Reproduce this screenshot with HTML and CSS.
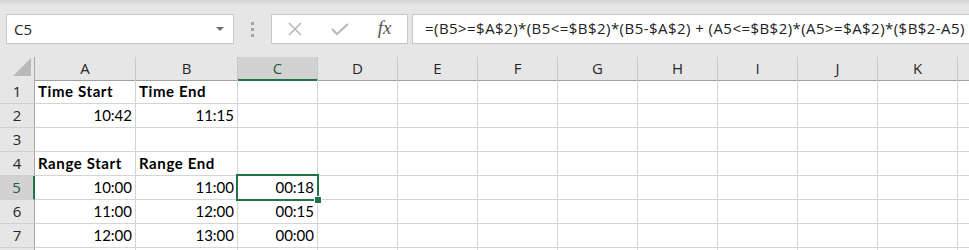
FILE: index.html
```html
<!DOCTYPE html>
<html lang="en">
<head>
    <meta charset="UTF-8">
    <title>Book1 - Excel</title>
    <link rel="stylesheet" href="styles.css">
</head>
<body>
    <div class="toolbar">
        <div class="name-box">
            <span>C5</span>
            <span class="drop"></span>
        </div>
        <div class="grip"><i></i><i></i><i></i></div>
        <div class="fx-buttons">
            <span class="fx-btn">
                <svg width="16" height="16" viewBox="0 0 16 16"><path d="M2 2 L14 14 M14 2 L2 14" stroke="#b8b8b8" stroke-width="1.6" fill="none"/></svg>
            </span>
            <span class="fx-btn">
                <svg width="20" height="14" viewBox="0 0 20 14"><path d="M2 7 L7 12 L18 2" stroke="#b8b8b8" stroke-width="2" fill="none"/></svg>
            </span>
            <span class="fx-btn fx">fx</span>
        </div>
        <div class="formula">=(B5&gt;=$A$2)*(B5&lt;=$B$2)*(B5-$A$2) + (A5&lt;=$B$2)*(A5&gt;=$A$2)*($B$2-A5)</div>
    </div>

    <div class="sheet">
        <div class="row head">
            <div class="corner">
                <svg width="34" height="22" viewBox="0 0 34 22"><polygon points="31,1 31,19 13,19" fill="#b9b9b9"/></svg>
            </div>
            <div class="ch">A</div><div class="ch">B</div><div class="ch sel-col">C</div><div class="ch">D</div>
            <div class="ch">E</div><div class="ch">F</div><div class="ch">G</div><div class="ch">H</div>
            <div class="ch">I</div><div class="ch">J</div><div class="ch">K</div><div class="ch">L</div>
        </div>
        <div class="row">
            <div class="rh">1</div>
            <div class="cell bold">Time Start</div><div class="cell bold">Time End</div><div class="cell"></div>
            <div class="cell"></div><div class="cell"></div><div class="cell"></div><div class="cell"></div>
            <div class="cell"></div><div class="cell"></div><div class="cell"></div><div class="cell"></div><div class="cell"></div>
        </div>
        <div class="row">
            <div class="rh">2</div>
            <div class="cell num">10:42</div><div class="cell num">11:15</div><div class="cell"></div>
            <div class="cell"></div><div class="cell"></div><div class="cell"></div><div class="cell"></div>
            <div class="cell"></div><div class="cell"></div><div class="cell"></div><div class="cell"></div><div class="cell"></div>
        </div>
        <div class="row">
            <div class="rh">3</div>
            <div class="cell"></div><div class="cell"></div><div class="cell"></div>
            <div class="cell"></div><div class="cell"></div><div class="cell"></div><div class="cell"></div>
            <div class="cell"></div><div class="cell"></div><div class="cell"></div><div class="cell"></div><div class="cell"></div>
        </div>
        <div class="row">
            <div class="rh">4</div>
            <div class="cell bold">Range Start</div><div class="cell bold">Range End</div><div class="cell"></div>
            <div class="cell"></div><div class="cell"></div><div class="cell"></div><div class="cell"></div>
            <div class="cell"></div><div class="cell"></div><div class="cell"></div><div class="cell"></div><div class="cell"></div>
        </div>
        <div class="row">
            <div class="rh sel-row">5</div>
            <div class="cell num">10:00</div><div class="cell num">11:00</div>
            <div class="cell num active">00:18<span class="sel-box"></span><span class="handle"></span></div>
            <div class="cell"></div><div class="cell"></div><div class="cell"></div><div class="cell"></div>
            <div class="cell"></div><div class="cell"></div><div class="cell"></div><div class="cell"></div><div class="cell"></div>
        </div>
        <div class="row">
            <div class="rh">6</div>
            <div class="cell num">11:00</div><div class="cell num">12:00</div><div class="cell num">00:15</div>
            <div class="cell"></div><div class="cell"></div><div class="cell"></div><div class="cell"></div>
            <div class="cell"></div><div class="cell"></div><div class="cell"></div><div class="cell"></div><div class="cell"></div>
        </div>
        <div class="row">
            <div class="rh">7</div>
            <div class="cell num">12:00</div><div class="cell num">13:00</div><div class="cell num">00:00</div>
            <div class="cell"></div><div class="cell"></div><div class="cell"></div><div class="cell"></div>
            <div class="cell"></div><div class="cell"></div><div class="cell"></div><div class="cell"></div><div class="cell"></div>
        </div>
        <div class="row">
            <div class="rh">8</div>
            <div class="cell"></div><div class="cell"></div><div class="cell"></div>
            <div class="cell"></div><div class="cell"></div><div class="cell"></div><div class="cell"></div>
            <div class="cell"></div><div class="cell"></div><div class="cell"></div><div class="cell"></div><div class="cell"></div>
        </div>
    </div>
</body>
</html>
```

FILE: styles.css
```css
body {
    margin: 0;
    width: 969px;
    height: 250px;
    overflow: hidden;
    background-color: #fff;
    font-family: 'Open Sans', 'Noto Sans', sans-serif;
    color: #222;
}

.toolbar {
    display: flex;
    align-items: flex-start;
    height: 57px;
    box-sizing: border-box;
    padding: 14px 0 0 6px;
    background: linear-gradient(#d3d3d3, #e6e6e6 5px);
}

.name-box {
    display: flex;
    align-items: center;
    justify-content: space-between;
    width: 228px;
    height: 30px;
    box-sizing: border-box;
    padding: 0 9px 0 7px;
    background-color: #fff;
    border: 1px solid #c6c6c6;
    font-size: 15px;
    color: #262626;
}

.drop {
    width: 0;
    height: 0;
    border-left: 4px solid transparent;
    border-right: 4px solid transparent;
    border-top: 4px solid #6e6e6e;
}

.grip {
    display: flex;
    flex-direction: column;
    gap: 3px;
    margin: 8px 17px 0 17px;
}

.grip i {
    display: block;
    width: 3px;
    height: 3px;
    background-color: #a6a6a6;
}

.fx-buttons {
    display: flex;
    width: 137px;
    height: 30px;
    box-sizing: border-box;
    background-color: #fff;
    border: 1px solid #c6c6c6;
}

.fx-btn {
    display: flex;
    align-items: center;
    justify-content: center;
    width: 45px;
}

.fx {
    font-family: 'Liberation Serif', serif;
    font-style: italic;
    font-size: 19px;
    color: #555;
    padding-bottom: 2px;
}

.formula {
    flex: 1;
    height: 30px;
    box-sizing: border-box;
    margin-left: 4px;
    margin-right: -3px;
    padding-left: 12px;
    background-color: #fff;
    border: 1px solid #c6c6c6;
    font-size: 15px;
    letter-spacing: 0.45px;
    line-height: 27px;
    color: #222;
    white-space: nowrap;
    overflow: hidden;
}

.row {
    display: grid;
    grid-template-columns: 35px 101px 102px repeat(10, 80px);
    height: 24px;
}

.row.head {
    height: 23px;
}

.corner,
.ch,
.rh,
.cell {
    box-sizing: border-box;
    white-space: nowrap;
}

.corner {
    background-color: #e6e6e6;
    border-right: 1px solid #a8a8a8;
    border-bottom: 1px solid #a0a0a0;
}

.corner svg {
    display: block;
}

.ch {
    background-color: #e6e6e6;
    border-right: 1px solid #c8c8c8;
    border-bottom: 1px solid #a0a0a0;
    text-align: center;
    font-size: 15px;
    line-height: 22px;
    color: #262626;
}

.ch.sel-col {
    background-color: #d2d2d2;
    border-bottom: 2px solid #217346;
    color: #1f5c3a;
}

.rh {
    background-color: #e6e6e6;
    border-right: 1px solid #a8a8a8;
    border-bottom: 1px solid #d0d0d0;
    text-align: center;
    font-size: 15px;
    line-height: 23px;
    color: #262626;
}

.rh.sel-row {
    background-color: #d2d2d2;
    border-right: 2px solid #217346;
    color: #1f5c3a;
}

.cell {
    border-right: 1px solid #d4d4d4;
    border-bottom: 1px solid #d4d4d4;
    padding: 0 3px;
    font-family: Lato, 'Liberation Sans', sans-serif;
    font-size: 15px;
    line-height: 23px;
    color: #000;
}

.cell.bold {
    font-weight: bold;
    letter-spacing: 0.6px;
}

.cell.num {
    text-align: right;
}

.cell.active {
    position: relative;
}

.sel-box {
    position: absolute;
    top: -2px;
    left: -2px;
    right: -2px;
    bottom: -2px;
    border: 2px solid #217346;
}

.handle {
    position: absolute;
    right: -4px;
    bottom: -4px;
    width: 6px;
    height: 6px;
    background-color: #217346;
    box-shadow: 0 0 0 1px #fff;
}
```
